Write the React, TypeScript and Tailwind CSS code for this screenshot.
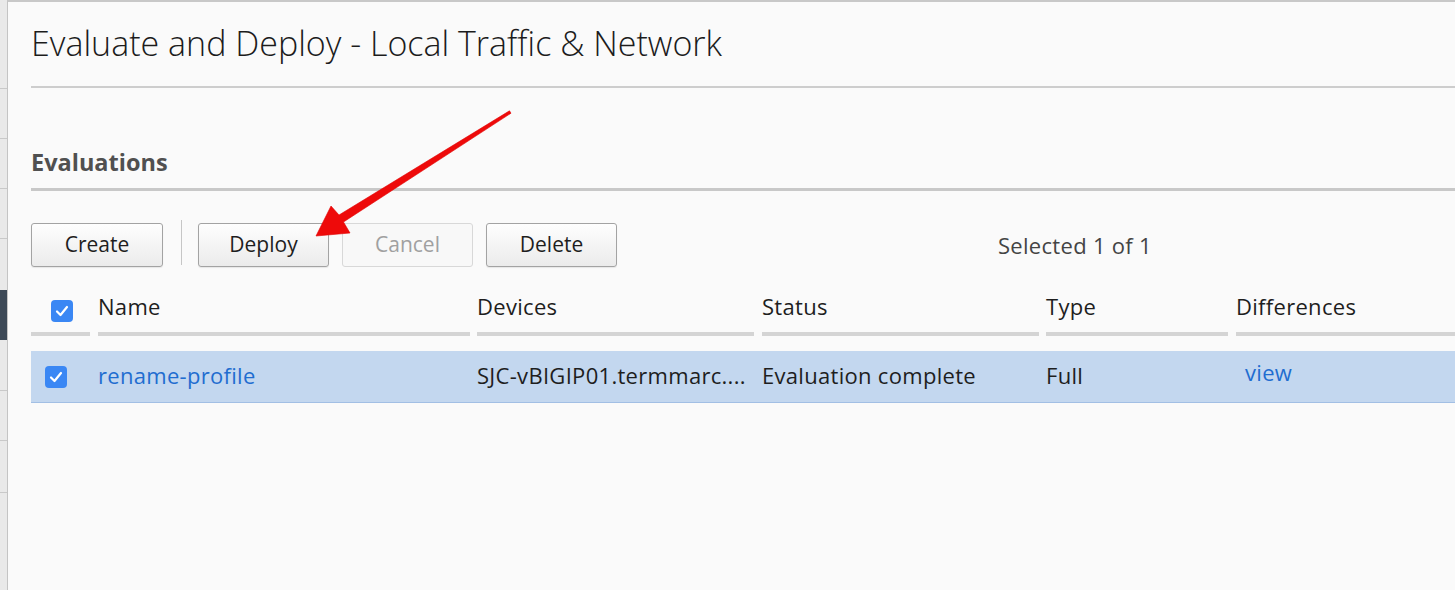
import React from "react";

const font = { fontFamily: '"Open Sans", "Liberation Sans", sans-serif' };

function Check({ className = "" }: { className?: string }) {
  return (
    <div className={"w-[22px] h-[22px] rounded-[4px] bg-[#3a87f4] flex items-center justify-center " + className}>
      <svg width="14" height="12" viewBox="0 0 14 12" fill="none">
        <path d="M2 6.5 L5.5 10 L12 2" stroke="white" strokeWidth="2.2" strokeLinecap="round" strokeLinejoin="round" />
      </svg>
    </div>
  );
}

function Btn({ label, disabled = false, className = "" }: { label: string; disabled?: boolean; className?: string }) {
  return (
    <div
      className={
        "h-[44px] w-[131px] rounded-[3px] border flex items-center justify-center text-[21px] " +
        (disabled
          ? "border-[#d8d8d8] bg-[#f8f8f8] text-[#a0a0a0] "
          : "border-[#a3a3a3] bg-gradient-to-b from-[#fefefe] to-[#ebebeb] text-[#1e1e1e] shadow-[0_1px_1px_rgba(0,0,0,0.08)] ") +
        className
      }
    >
      {label}
    </div>
  );
}

const cols = [
  { w: "w-[59px]", mr: "mr-[8px]" },
  { w: "w-[372px]", mr: "mr-[7px]" },
  { w: "w-[277px]", mr: "mr-[8px]" },
  { w: "w-[277px]", mr: "mr-[7px]" },
  { w: "w-[182px]", mr: "mr-[8px]" },
  { w: "flex-1", mr: "" },
];

export default function App() {
  const stripLines = [88, 138, 188, 238, 390, 440, 492];
  return (
    <div className="relative w-[1455px] h-[590px] overflow-hidden flex bg-[#fafafa]" style={font}>
      {/* background page strip */}
      <div className="relative w-[7px] h-full bg-[#e9e9e9] shrink-0">
        {stripLines.map((y) => (
          <div key={y} className="absolute left-0 w-full h-px bg-[#c9c9c9]" style={{ top: y }} />
        ))}
        <div className="absolute left-0 w-full bg-[#3d4957]" style={{ top: 290, height: 50 }} />
      </div>
      {/* dialog */}
      <div className="flex-1 h-full border-l border-[#c4c4c4] border-t-2 border-t-[#c8c8c8] bg-[#fafafa] pl-[23px] flex flex-col">
        <div className="h-[84px] pt-[19px]">
          <div className="text-[34px] leading-[44px] font-light text-[#1c1c1c] whitespace-nowrap">
            Evaluate and Deploy - Local Traffic &amp; Network
          </div>
        </div>
        <div className="h-[2px] bg-[#cdcdcd]" />
        <div className="h-[100px] pt-[58px]">
          <div className="text-[23.5px] leading-[32px] font-bold text-[#505050]">Evaluations</div>
        </div>
        <div className="h-[3px] bg-[#c8c8c8]" />
        <div className="pt-[32px] flex items-start">
          <Btn label="Create" className="w-[132px]" />
          <div className="w-px h-[45px] -mt-[3px] bg-[#c6c6c6] ml-[18px]" />
          <Btn label="Deploy" className="ml-[16px]" />
          <Btn label="Cancel" disabled className="ml-[13px]" />
          <Btn label="Delete" className="ml-[13px]" />
          <div className="ml-[381px] h-[44px] flex items-center text-[22px] tracking-[0.3px] text-[#444] whitespace-nowrap">Selected 1 of 1</div>
        </div>
        {/* table header */}
        <div className="h-[65px] flex">
          {cols.map((c, i) => (
            <div key={i} className={c.w + " " + c.mr + " shrink-0"}>
              {i === 0 ? (
                <Check className="ml-[20px] mt-[33px]" />
              ) : (
                <div className="pt-[25px] text-[22px] leading-[28px] tracking-[0.3px] text-[#1e1e1e] whitespace-nowrap">
                  {["", "Name", "Devices", "Status", "Type", "Differences"][i]}
                </div>
              )}
            </div>
          ))}
        </div>
        <div className="h-[4px] flex">
          {cols.map((c, i) => (
            <div key={i} className={c.w + " " + c.mr + " shrink-0 h-[4px] bg-[#d4d4d4]"} />
          ))}
        </div>
        <div className="h-[15px]" />
        {/* row */}
        <div className="h-[52px] pb-[3px] flex items-center bg-[#c3d7ef] border-b border-[#a2bfe4] text-[22px] leading-[28px] tracking-[0.3px] text-[#1e1e1e] whitespace-nowrap">
          <div className="w-[59px] mr-[8px] shrink-0 flex pt-[3px]">
            <Check className="ml-[14px]" />
          </div>
          <div className="w-[372px] mr-[7px] shrink-0 text-[#1f6dd0]">rename-profile</div>
          <div className="w-[277px] mr-[8px] shrink-0 overflow-hidden">SJC-vBIGIP01.termmarc....</div>
          <div className="w-[277px] mr-[7px] shrink-0">Evaluation complete</div>
          <div className="w-[182px] mr-[8px] shrink-0">Full</div>
          <div className="flex-1 pl-[9px] pb-[7px] text-[#1f6dd0]">view</div>
        </div>
      </div>
      {/* red arrow annotation */}
      <svg className="absolute left-0 top-0 pointer-events-none" width="1455" height="590">
        <polygon
          points="316,236 331,206 339,215 509.5,110.8 511,113.2 343.5,222 350,233"
          fill="#ee0a0a"
          stroke="#e00000"
          strokeWidth="0.6"
          strokeLinejoin="round"
        />
      </svg>
    </div>
  );
}
